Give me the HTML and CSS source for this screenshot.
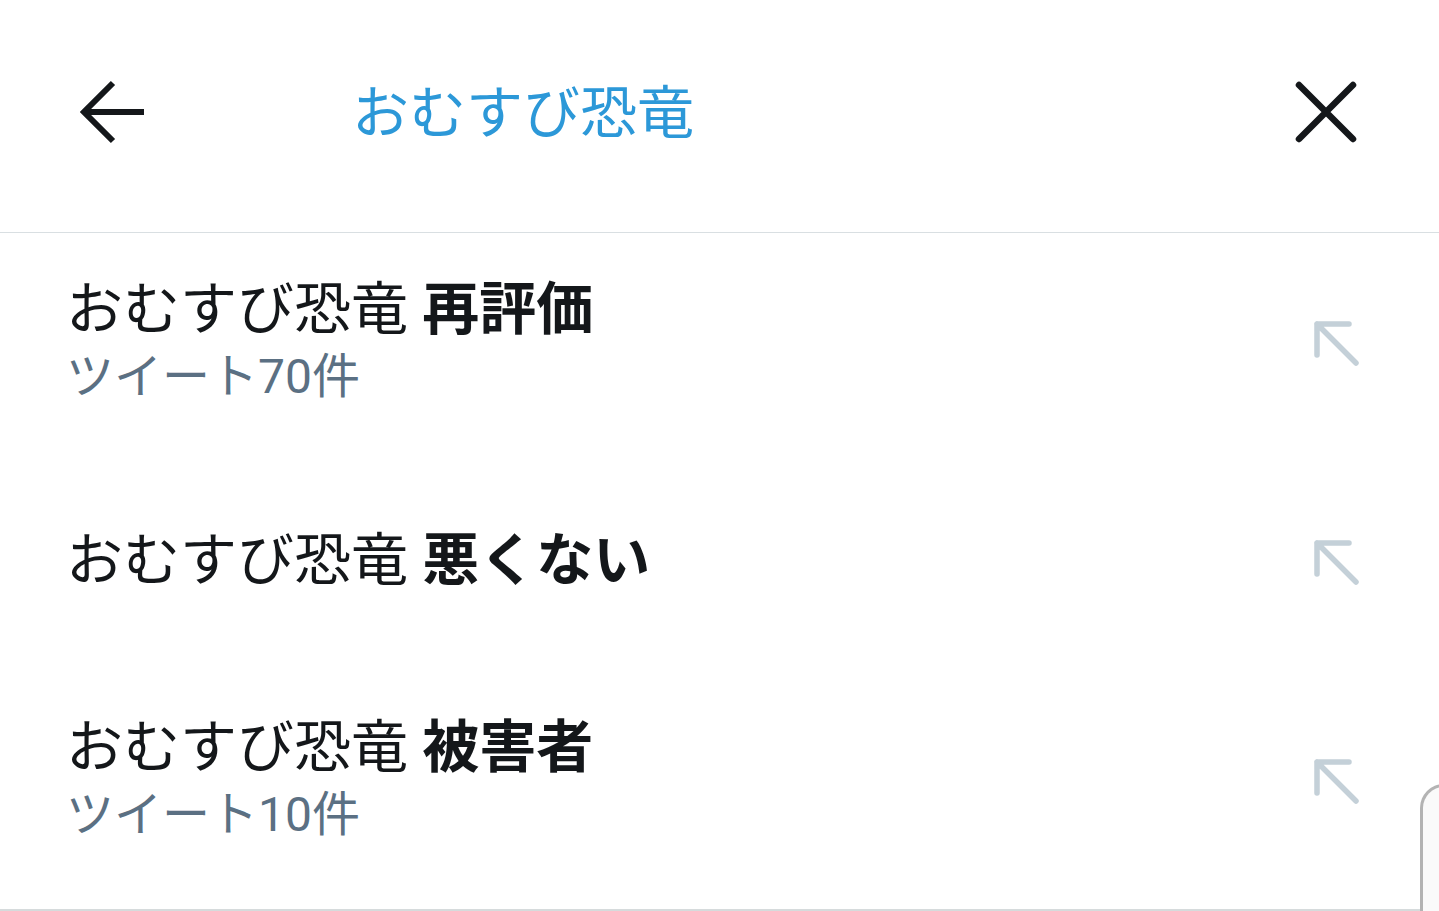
FILE: index.html
```html
<!DOCTYPE html>
<html lang="ja">
<head>
    <meta charset="UTF-8">
    <meta name="viewport" content="width=device-width, initial-scale=1.0">
    <title>検索</title>
    <link rel="stylesheet" href="styles.css">
</head>
<body>
    <div class="header">
        <svg class="back" width="64" height="64" viewBox="0 0 64 64">
            <path d="M64 32H5M33 3L4 32L33 61" fill="none" stroke="#14171a" stroke-width="6"/>
        </svg>
        <div class="query">おむすび恐竜</div>
        <svg class="close" width="64" height="64" viewBox="0 0 64 64">
            <path d="M5 5L59 59M59 5L5 59" fill="none" stroke="#14171a" stroke-width="6.5" stroke-linecap="round"/>
        </svg>
    </div>

    <div class="list">
        <div class="row">
            <div class="text">
                <div class="title">おむすび恐竜 <b>再評価</b></div>
                <div class="sub">ツイート70件</div>
            </div>
            <svg class="fill" width="48" height="48" viewBox="0 0 48 48">
                <path d="M37 5H5V36M5 5L44 44" fill="none" stroke="#c4d0d8" stroke-width="5.5" stroke-linecap="round" stroke-linejoin="round"/>
            </svg>
        </div>
        <div class="row">
            <div class="text">
                <div class="title">おむすび恐竜 <b>悪くない</b></div>
            </div>
            <svg class="fill" width="48" height="48" viewBox="0 0 48 48">
                <path d="M37 5H5V36M5 5L44 44" fill="none" stroke="#c4d0d8" stroke-width="5.5" stroke-linecap="round" stroke-linejoin="round"/>
            </svg>
        </div>
        <div class="row">
            <div class="text">
                <div class="title">おむすび恐竜 <b>被害者</b></div>
                <div class="sub">ツイート10件</div>
            </div>
            <svg class="fill" width="48" height="48" viewBox="0 0 48 48">
                <path d="M37 5H5V36M5 5L44 44" fill="none" stroke="#c4d0d8" stroke-width="5.5" stroke-linecap="round" stroke-linejoin="round"/>
            </svg>
        </div>
    </div>

    <div class="handle"></div>
</body>
</html>
```

FILE: styles.css
```css
html {
    overflow: hidden;
}
body {
    margin: 0;
    background: #ffffff;
    font-family: Roboto, "Noto Sans CJK JP", sans-serif;
    color: #14171a;
    overflow: hidden;
    height: 911px;
    position: relative;
}
.header {
    display: flex;
    align-items: center;
    height: 224px;
    padding: 0 81px 8px 80px;
    border-bottom: 1px solid #d9dfe2;
}
.back {
    flex: none;
}
.query {
    flex: 1;
    margin-left: 208px;
    font-size: 57px;
    color: #2c98d8;
    line-height: 64px;
    position: relative;
    top: 2px;
}
.close {
    flex: none;
}
.list {
    padding-bottom: 19px;
    border-bottom: 2px solid #d6dbdc;
}
.row {
    display: flex;
    align-items: center;
    height: 219px;
    padding: 0 79px 0 66px;
}
.text {
    flex: 1;
}
.title {
    font-size: 57px;
    line-height: 64px;
    white-space: nowrap;
    position: relative;
    top: -1px;
}
.title b {
    font-weight: 700;
}
.sub {
    font-size: 48px;
    line-height: 64px;
    color: #5b7083;
    position: relative;
    top: 2px;
}
.fill {
    flex: none;
}
.handle {
    position: absolute;
    left: 1420px;
    top: 784px;
    width: 60px;
    height: 124px;
    border: 3px solid #b3b3b3;
    border-bottom: none;
    border-radius: 24px 0 0 0;
    background: #fafafa;
}
```
